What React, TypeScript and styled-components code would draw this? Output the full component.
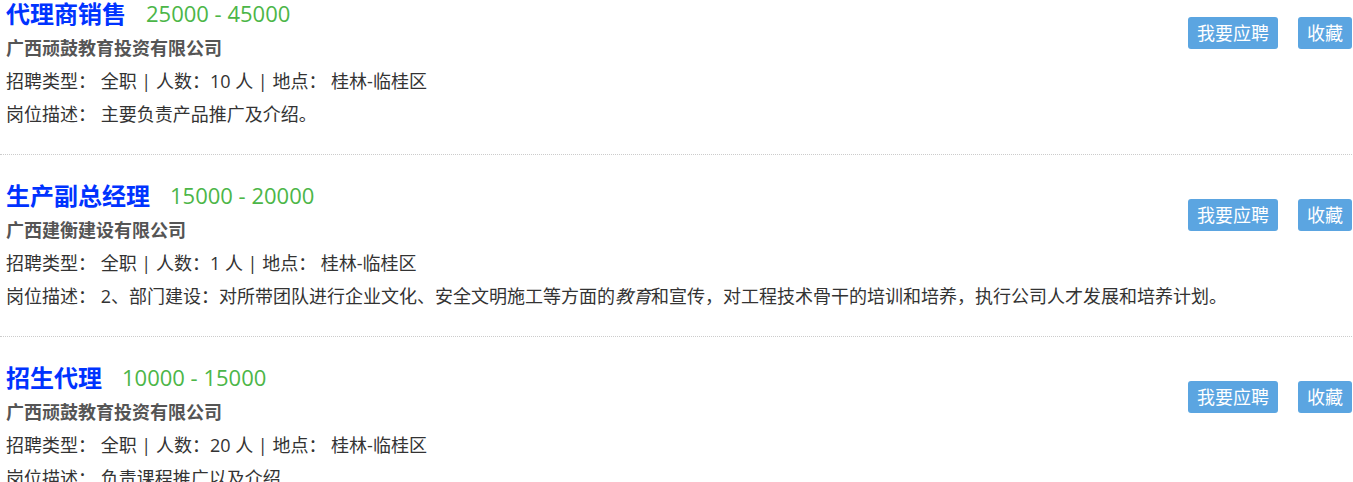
import React from "react";
import styled, { createGlobalStyle } from "styled-components";

const GlobalStyle = createGlobalStyle`
  html, body {
    margin: 0;
    padding: 0;
    background: #ffffff;
  }
  body {
    font-family: "Open Sans", "Noto Sans CJK SC", sans-serif;
    color: #333333;
  }
`;

const List = styled.ul`
  list-style: none;
  margin: -27px 0 0 0;
  padding: 0;
  width: 1352px;
`;

const Item = styled.li`
  display: flex;
  justify-content: space-between;
  align-items: flex-start;
  padding: 22px 0 23px 6px;
  border-bottom: 1px dotted #cccccc;
`;

const Info = styled.div`
  display: flex;
  flex-direction: column;
  flex: 1 1 auto;
  min-width: 0;
`;

const TitleRow = styled.div`
  display: flex;
  align-items: center;
  height: 37px;
  gap: 20px;
`;

const JobTitle = styled.a`
  font-size: 24px;
  font-weight: 700;
  color: #0033ff;
  text-decoration: none;
  line-height: 37px;
`;

const Salary = styled.span`
  font-size: 22px;
  color: #4cb648;
  line-height: 37px;
`;

const Company = styled.div`
  font-size: 18px;
  font-weight: 700;
  color: #555555;
  line-height: 33px;
`;

const Line = styled.div`
  font-size: 18px;
  color: #333333;
  line-height: 33px;
  white-space: nowrap;
`;

const Actions = styled.div`
  display: flex;
  flex: 0 0 auto;
  gap: 20px;
  margin-top: 22px;
`;

const Button = styled.button`
  height: 32px;
  padding: 0 9px;
  border: none;
  border-radius: 3px;
  background: #5ba5e1;
  color: #ffffff;
  font-family: "Open Sans", "Noto Sans CJK SC", sans-serif;
  font-size: 18px;
  line-height: 32px;
  white-space: nowrap;
  cursor: pointer;
`;

type Job = {
  title: string;
  salary: string;
  company: string;
  count: string;
  desc: React.ReactNode;
};

const jobs: Job[] = [
  {
    title: "代理商销售",
    salary: "25000 - 45000",
    company: "广西顽鼓教育投资有限公司",
    count: "10",
    desc: "主要负责产品推广及介绍。",
  },
  {
    title: "生产副总经理",
    salary: "15000 - 20000",
    company: "广西建衡建设有限公司",
    count: "1",
    desc: (
      <>
        2、部门建设：对所带团队进行企业文化、安全文明施工等方面的<em>教育</em>和宣传，对工程技术骨干的培训和培养，执行公司人才发展和培养计划。
      </>
    ),
  },
  {
    title: "招生代理",
    salary: "10000 - 15000",
    company: "广西顽鼓教育投资有限公司",
    count: "20",
    desc: "负责课程推广以及介绍",
  },
];

export default function App() {
  return (
    <>
      <GlobalStyle />
      <List>
        {jobs.map((job) => (
          <Item key={job.title}>
            <Info>
              <TitleRow>
                <JobTitle href="#">{job.title}</JobTitle>
                <Salary>{job.salary}</Salary>
              </TitleRow>
              <Company>{job.company}</Company>
              <Line>
                招聘类型： 全职 | 人数：{job.count} 人 | 地点： 桂林-临桂区
              </Line>
              <Line>岗位描述： {job.desc}</Line>
            </Info>
            <Actions>
              <Button>我要应聘</Button>
              <Button>收藏</Button>
            </Actions>
          </Item>
        ))}
      </List>
    </>
  );
}
